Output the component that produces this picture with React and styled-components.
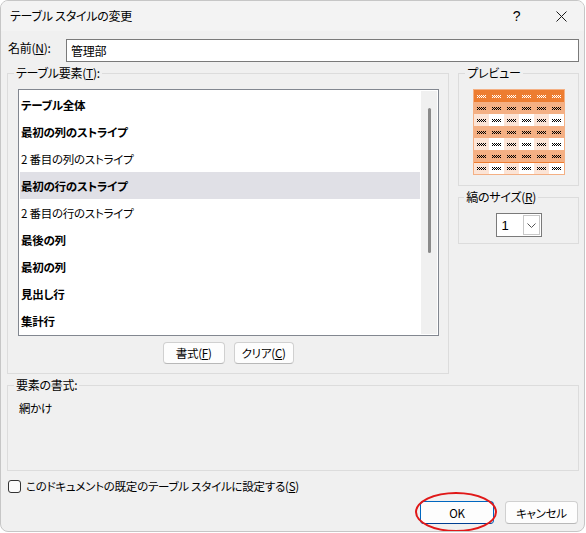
import styled, { createGlobalStyle } from "styled-components";

const GlobalStyle = createGlobalStyle`
  html, body {
    margin: 0;
    padding: 0;
    background: #ffffff;
  }
`;

const StyledWindow = styled.div`
  position: relative;
  width: 585px;
  height: 532px;
  box-sizing: border-box;
  border: 1px solid #c6c6c6;
  border-radius: 8px;
  overflow: hidden;
  background: #f0f0f0;
  display: flex;
  flex-direction: column;
  font-family: "Noto Sans CJK JP", "Noto Sans", sans-serif;
  font-size: 11.5px;
  letter-spacing: -0.25px;
  font-feature-settings: "palt";
  color: #000;
`;

const StyledTitleBar = styled.div`
  display: flex;
  align-items: center;
  height: 30px;
  padding-left: 9px;
  background: #f3f3f3;
`;

const StyledTitle = styled.span`
  flex: 1;
  line-height: 16px;
  font-size: 12px;
`;

const StyledCaptionButton = styled.div`
  width: 45px;
  height: 30px;
  display: flex;
  align-items: center;
  justify-content: center;
  font-family: "Liberation Sans", sans-serif;
  font-size: 14px;
`;

const StyledBody = styled.div`
  flex: 1;
  padding: 8px 5px 0 6px;
  display: flex;
  flex-direction: column;
`;

const StyledNameRow = styled.div`
  display: flex;
  align-items: center;
  height: 23px;
`;

const StyledNameLabel = styled.label`
  width: 58px;
  padding-left: 1px;
  line-height: 16px;
  margin-top: -5px;
  font-size: 12px;
`;

const StyledInput = styled.div`
  flex: 1;
  height: 23px;
  box-sizing: border-box;
  border: 1px solid #7a7a7a;
  background: #fff;
  padding-left: 4px;
  display: flex;
  align-items: center;
  font-size: 12px;
`;

const StyledMiddle = styled.div`
  display: flex;
  gap: 9px;
  margin-top: 3px;
`;

const StyledGroup = styled.fieldset`
  margin: ${(p) => p.$mt || 0}px 0 0 0;
  padding: 0;
  min-width: 0;
  border: 1px solid #dcdcdc;
  width: ${(p) => p.$w || "auto"};
  box-sizing: border-box;
`;

const StyledLegend = styled.legend`
  margin-left: ${(p) => p.$ml ?? 6}px;
  padding: 0 2px;
  line-height: 16px;
  font-size: 12px;
`;

const StyledGroupInner = styled.div`
  padding: ${(p) => p.$pad};
  height: ${(p) => (p.$h ? `${p.$h}px` : "auto")};
  box-sizing: border-box;
  display: flex;
  flex-direction: column;
  align-items: ${(p) => p.$align || "stretch"};
`;

const StyledListBox = styled.div`
  display: flex;
  width: 421px;
  height: 247px;
  box-sizing: border-box;
  border: 1px solid #828790;
  background: #fff;
  padding: 1px;
  gap: 1px;
`;

const StyledRows = styled.div`
  flex: 0 0 400px;
  display: flex;
  flex-direction: column;
`;

const StyledRow = styled.div`
  height: 27px;
  flex: 0 0 27px;
  display: flex;
  align-items: center;
  padding-left: 1px;
  font-weight: ${(p) => (p.$bold ? 700 : 400)};
  background: ${(p) => (p.$selected ? "#e0e0e6" : "transparent")};
`;

const StyledScrollbar = styled.div`
  flex: 0 0 16px;
  background: #f0f0f0;
  padding-top: 17px;
  box-sizing: border-box;
`;

const StyledThumb = styled.div`
  margin-left: 7px;
  width: 3px;
  height: 145px;
  border-radius: 2px;
  background: #8a8a8a;
`;

const StyledButtonRow = styled.div`
  display: flex;
  justify-content: ${(p) => p.$justify || "center"};
  gap: ${(p) => p.$gap || 9}px;
  margin-top: ${(p) => p.$mt || 0}px;
  padding-right: ${(p) => p.$pr || 0}px;
`;

const StyledButton = styled.div`
  position: relative;
  width: ${(p) => p.$w}px;
  height: ${(p) => p.$h || 22}px;
  box-sizing: border-box;
  border: 1px solid ${(p) => (p.$default ? "#0067c0" : "#d0d0d0")};
  border-bottom-color: ${(p) => (p.$default ? "#003e92" : "#b8b8b8")};
  border-radius: 4px;
  background: #fdfdfd;
  display: flex;
  align-items: center;
  justify-content: center;
  line-height: 16px;
`;

const StyledRing = styled.div`
  position: absolute;
  left: -6px;
  top: -10px;
  width: 82px;
  height: 40px;
  box-sizing: border-box;
  border: 2px solid #e01818;
  border-radius: 50%;
  pointer-events: none;
`;

const StyledSide = styled.div`
  width: 121px;
  display: flex;
  flex-direction: column;
  gap: 3px;
`;

const StyledPreview = styled.div`
  display: grid;
  grid-template-columns: repeat(6, 15px);
  grid-auto-rows: 12px;
  border: 1px solid #f4b084;
`;

const StyledCell = styled.div`
  background: ${(p) => p.$bg};
  display: flex;
  align-items: center;
  justify-content: center;
  box-shadow: ${(p) => (p.$topLine ? "inset 0 1px 0 #ed7d31" : "none")};
`;

const StyledSelect = styled.div`
  width: 46px;
  height: 24px;
  box-sizing: border-box;
  border: 1px solid #7a7a7a;
  background: #fff;
  display: flex;
  align-items: center;
  padding: 1px;
`;

const StyledSelectValue = styled.span`
  flex: 1;
  padding-left: 4px;
  font-family: "Liberation Sans", sans-serif;
  font-size: 13px;
`;

const StyledDropButton = styled.div`
  width: 17px;
  height: 20px;
  box-sizing: border-box;
  border: 1px solid #c8c8c8;
  display: flex;
  align-items: center;
  justify-content: center;
`;

const StyledText = styled.div`
  line-height: 16px;
`;

const StyledCheckRow = styled.div`
  display: flex;
  align-items: center;
  gap: 5px;
  height: 16px;
  margin-top: 7px;
  padding-left: 1px;
`;

const StyledCheckbox = styled.div`
  width: 13px;
  height: 13px;
  box-sizing: border-box;
  border: 1px solid #333;
  border-radius: 3px;
  background: #fbfbfb;
`;

function Mark({ color }) {
  const dots = [];
  for (let x = 0; x < 9; x++) {
    for (let y = 0; y < 3; y++) {
      if ((x + y) % 2 === 0) dots.push(<rect key={`${x}-${y}`} x={x} y={y} width="1" height="1" />);
    }
  }
  return (
    <svg width="9" height="3" viewBox="0 0 9 3" fill={color}>
      {dots}
    </svg>
  );
}

const ORANGE = "#ed7d31";
const BAND = "#f4b084";
const PEACH = "#fce4d6";

function PreviewTable() {
  const rows = [];
  for (let r = 0; r < 7; r++) {
    for (let c = 0; c < 6; c++) {
      let bg;
      if (r === 0) bg = ORANGE;
      else if (r % 2 === 1) bg = BAND;
      else bg = c % 2 === 0 ? PEACH : "#ffffff";
      rows.push(
        <StyledCell key={`${r}-${c}`} $bg={bg} $topLine={r === 6}>
          <Mark color={r === 0 ? "#ffffff" : "#000000"} />
        </StyledCell>
      );
    }
  }
  return <StyledPreview>{rows}</StyledPreview>;
}

const items = [
  { label: "テーブル全体", bold: true },
  { label: "最初の列のストライプ", bold: true },
  { label: "2 番目の列のストライプ" },
  { label: "最初の行のストライプ", bold: true, selected: true },
  { label: "2 番目の行のストライプ" },
  { label: "最後の列", bold: true },
  { label: "最初の列", bold: true },
  { label: "見出し行", bold: true },
  { label: "集計行", bold: true },
];

export default function App() {
  return (
    <>
      <GlobalStyle />
      <StyledWindow>
        <StyledTitleBar>
          <StyledTitle>テーブル スタイルの変更</StyledTitle>
          <StyledCaptionButton>?</StyledCaptionButton>
          <StyledCaptionButton>
            <svg width="11" height="11" viewBox="0 0 11 11" stroke="#1a1a1a" strokeWidth="1">
              <path d="M0.5 0.5L10.5 10.5M10.5 0.5L0.5 10.5" />
            </svg>
          </StyledCaptionButton>
        </StyledTitleBar>

        <StyledBody>
          <StyledNameRow>
            <StyledNameLabel>
              名前(<u>N</u>):
            </StyledNameLabel>
            <StyledInput>管理部</StyledInput>
          </StyledNameRow>

          <StyledMiddle>
            <StyledGroup $w="443px">
              <StyledLegend>
                テーブル要素(<u>T</u>):
              </StyledLegend>
              <StyledGroupInner $pad="8px 10px 9px">
                <StyledListBox>
                  <StyledRows>
                    {items.map((it) => (
                      <StyledRow key={it.label} $bold={it.bold} $selected={it.selected}>
                        {it.label}
                      </StyledRow>
                    ))}
                  </StyledRows>
                  <StyledScrollbar>
                    <StyledThumb />
                  </StyledScrollbar>
                </StyledListBox>
                <StyledButtonRow $mt={6}>
                  <StyledButton $w={62}>
                    書式(<u>F</u>)
                  </StyledButton>
                  <StyledButton $w={60}>
                    クリア(<u>C</u>)
                  </StyledButton>
                </StyledButtonRow>
              </StyledGroupInner>
            </StyledGroup>

            <StyledSide>
              <StyledGroup>
                <StyledLegend>プレビュー</StyledLegend>
                <StyledGroupInner $pad="8px 0 10px" $align="center">
                  <PreviewTable />
                </StyledGroupInner>
              </StyledGroup>
              <StyledGroup>
                <StyledLegend $ml={5}>
                  縞のサイズ(<u>R</u>)
                </StyledLegend>
                <StyledGroupInner $pad="8px 0 6px" $align="center">
                  <StyledSelect>
                    <StyledSelectValue>1</StyledSelectValue>
                    <StyledDropButton>
                      <svg width="9" height="5" viewBox="0 0 9 5" fill="none" stroke="#555" strokeWidth="1">
                        <path d="M0.5 0.5L4.5 4.5L8.5 0.5" />
                      </svg>
                    </StyledDropButton>
                  </StyledSelect>
                </StyledGroupInner>
              </StyledGroup>
            </StyledSide>
          </StyledMiddle>

          <StyledGroup $mt={3}>
            <StyledLegend>要素の書式:</StyledLegend>
            <StyledGroupInner $pad="7px 11px 0" $h={77}>
              <StyledText>網かけ</StyledText>
            </StyledGroupInner>
          </StyledGroup>

          <StyledCheckRow>
            <StyledCheckbox />
            <span>
              このドキュメントの既定のテーブル スタイルに設定する(<u>S</u>)
            </span>
          </StyledCheckRow>

          <StyledButtonRow $justify="flex-end" $gap={11} $mt={7} $pr={1}>
            <StyledButton $w={74} $h={23} $default>
              OK
              <StyledRing />
            </StyledButton>
            <StyledButton $w={73} $h={23}>
              キャンセル
            </StyledButton>
          </StyledButtonRow>
        </StyledBody>
      </StyledWindow>
    </>
  );
}
